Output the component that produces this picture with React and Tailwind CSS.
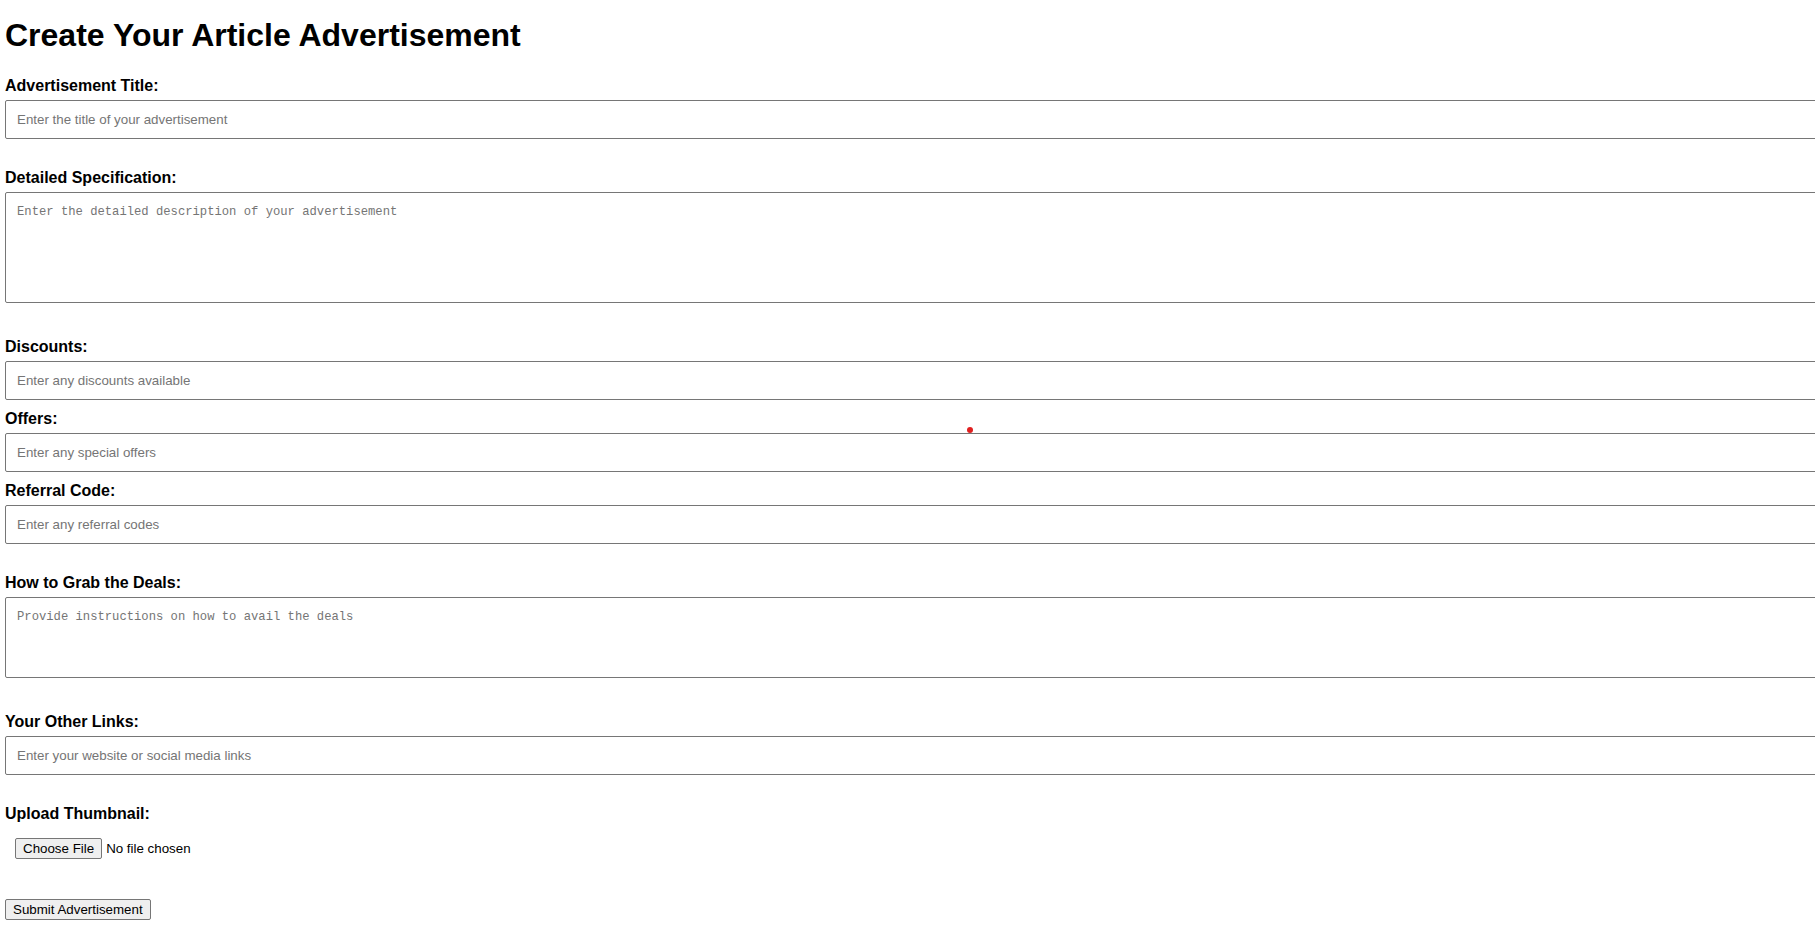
import React from "react";

const inputCls =
  "block w-[calc(100%+40px)] h-[39px] box-border border border-[#767676] rounded-[2px] bg-white pl-[11px] pr-[11px] text-[13.333px] leading-[15px] text-black placeholder:text-[#757575] outline-none font-['Liberation_Sans',Arial,sans-serif]";

const taCls =
  "block w-[calc(100%+40px)] box-border border border-[#767676] rounded-[2px] bg-white pl-[11px] pr-[11px] pt-[12px] text-[12.2px] leading-[14.5px] text-black placeholder:text-[#757575] outline-none resize-none font-['Liberation_Mono','Courier_New',monospace]";

const labelCls =
  "block text-[16px] leading-[18px] font-bold text-black mb-[5px]";

export default function App() {
  return (
    <div className="relative w-full min-h-screen overflow-hidden bg-white px-[5px] font-['Liberation_Sans',Arial,sans-serif] text-black">
      <h1 className="text-[32px] leading-[37px] font-bold pt-[17px] pb-[23px] text-black">
        Create Your Article Advertisement
      </h1>

      <form onSubmit={(e) => e.preventDefault()}>
        <div className="pb-[20px]">
          <label className={labelCls}>Advertisement Title:</label>
          <input
            type="text"
            className={inputCls + " mb-[10px]"}
            placeholder="Enter the title of your advertisement"
          />
        </div>

        <div className="pb-[20px]">
          <label className={labelCls}>Detailed Specification:</label>
          <textarea
            className={taCls + " h-[111px] mb-[15px]"}
            placeholder="Enter the detailed description of your advertisement"
          />
        </div>

        <div className="pb-[20px]">
          <label className={labelCls}>Discounts:</label>
          <input
            type="text"
            className={inputCls + " mb-[10px]"}
            placeholder="Enter any discounts available"
          />
          <label className={labelCls}>Offers:</label>
          <input
            type="text"
            className={inputCls + " mb-[10px]"}
            placeholder="Enter any special offers"
          />
          <label className={labelCls}>Referral Code:</label>
          <input
            type="text"
            className={inputCls + " mb-[10px]"}
            placeholder="Enter any referral codes"
          />
        </div>

        <div className="pb-[20px]">
          <label className={labelCls}>How to Grab the Deals:</label>
          <textarea
            className={taCls + " h-[81px] mb-[15px]"}
            placeholder="Provide instructions on how to avail the deals"
          />
        </div>

        <div className="pb-[20px]">
          <label className={labelCls}>Your Other Links:</label>
          <input
            type="text"
            className={inputCls + " mb-[10px]"}
            placeholder="Enter your website or social media links"
          />
        </div>

        <div className="pb-[20px]">
          <label className={labelCls}>Upload Thumbnail:</label>
          <div className="flex items-center pl-[10px] py-[10px] mb-[8px] text-[13.333px] text-black">
            <span className="box-border h-[21px] px-[7px] border border-[#767676] rounded-[2px] bg-[#efefef] leading-[19px] text-black mr-[4px] whitespace-nowrap">
              Choose File
            </span>
            <span className="leading-[15px] whitespace-nowrap">No file chosen</span>
          </div>
        </div>

        <button
          type="submit"
          className="box-border h-[21px] px-[7px] border border-[#767676] rounded-[2px] bg-[#efefef] text-[13.333px] leading-[19px] text-black whitespace-nowrap font-['Liberation_Sans',Arial,sans-serif]"
        >
          Submit Advertisement
        </button>
      </form>

      <div className="absolute left-[967px] top-[427px] w-[6px] h-[6px] rounded-full bg-[#e02020]" />
    </div>
  );
}
